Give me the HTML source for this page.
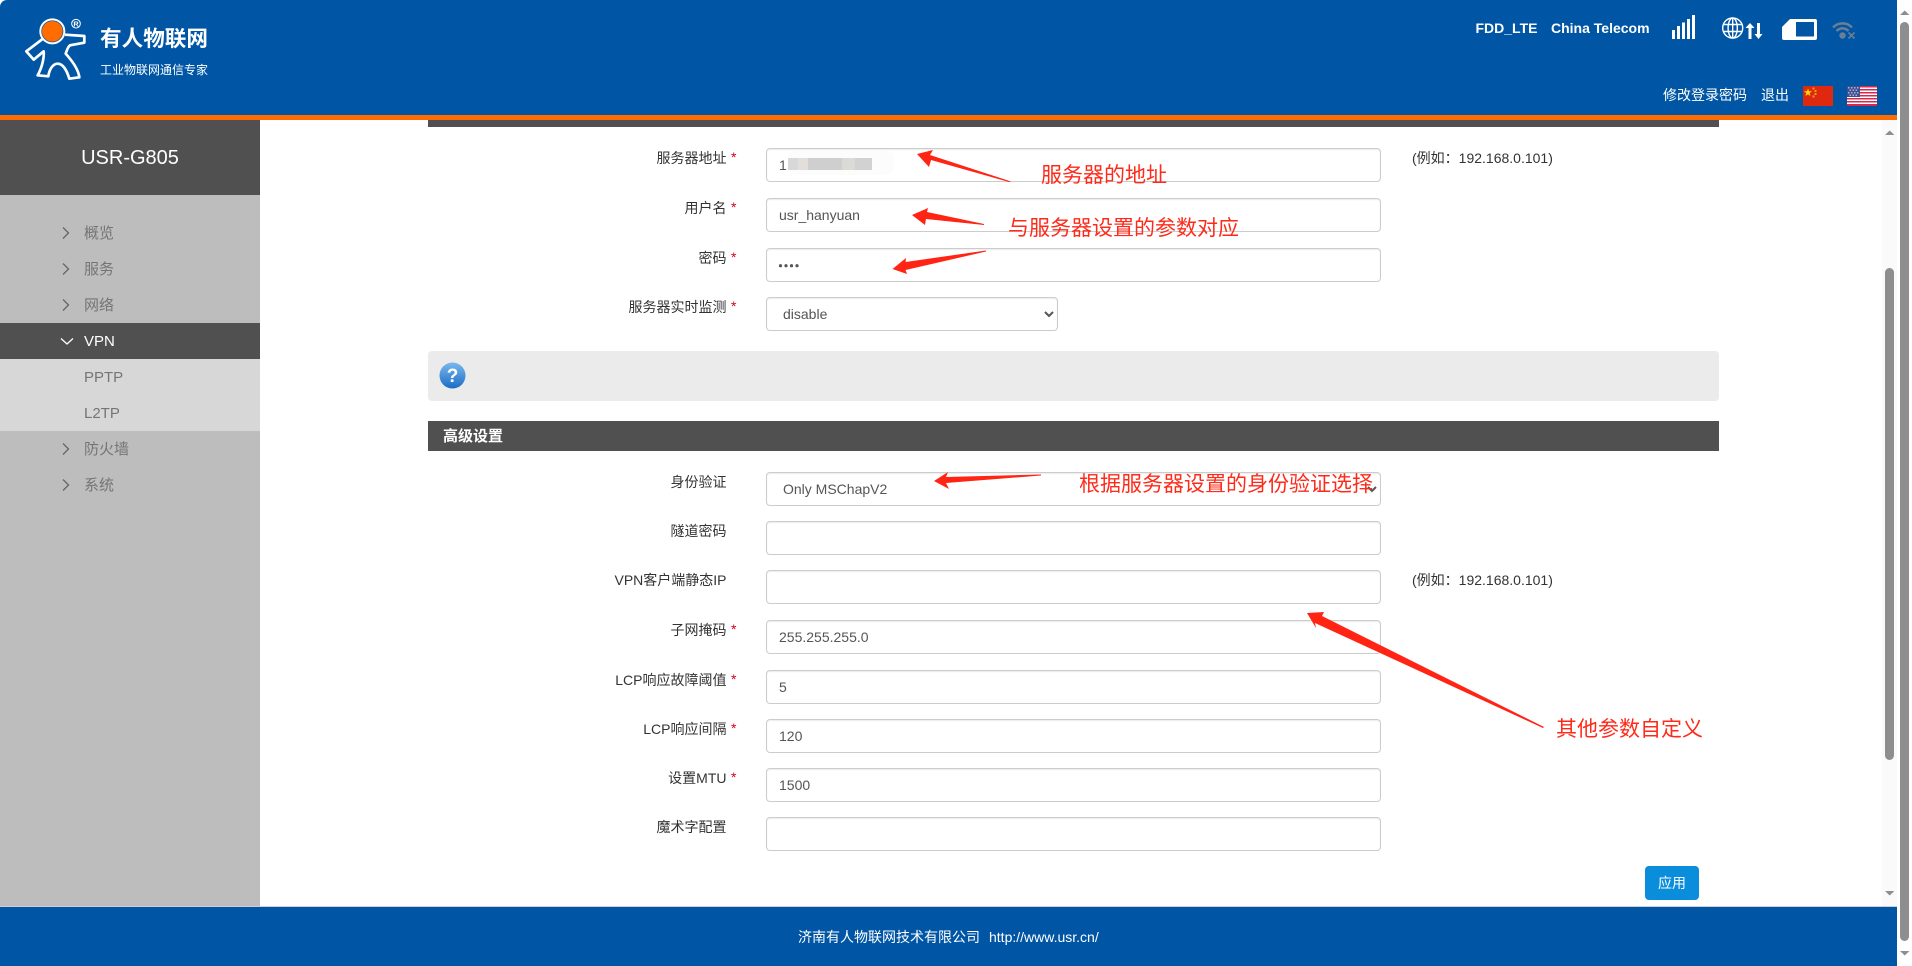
<!DOCTYPE html>
<html lang="zh-CN">
<head>
<meta charset="utf-8">
<title>USR-G805</title>
<style>
*{box-sizing:border-box}
html,body{margin:0;padding:0;width:1912px;height:966px;overflow:hidden;background:#fff}
body{position:relative;font-family:"Liberation Sans","Noto Sans CJK SC",sans-serif;font-size:14px;color:#333}
.a{position:absolute;white-space:nowrap}
#hd{position:absolute;left:0;top:0;width:1897px;height:120px;background:#0056a5;border-bottom:5px solid #ff6c00;border-top-left-radius:7px}
.w{color:#fff}
#side{position:absolute;left:0;top:120px;width:260px;height:786px;background:#bdbdbd}
#side .t{position:absolute;left:0;top:0;width:260px;height:75px;background:#505050;color:#fff;font-size:20px;line-height:77px;text-align:center}
.m{position:absolute;left:0;width:260px;height:36px;line-height:38px;font-size:15px;color:#757575;padding-left:84px}
.m svg{position:absolute;left:60px;top:10px}
.m.on{background:#505050;color:#fff}
.m.sub{background:#d7d7d7}
.bar{position:absolute;left:428px;width:1291px;background:#505050}
.lb{position:absolute;left:426px;width:300.5px;height:20px;line-height:20px;text-align:right;white-space:nowrap;color:#333}
.st{position:absolute;left:731px;height:20px;line-height:18px;color:#d0021b;font-size:14px}
.in{position:absolute;left:766px;width:615px;height:34px;border:1px solid #ccc;border-radius:4px;padding:0 12px;font:14px "Liberation Sans","Noto Sans CJK SC",sans-serif;color:#555;background:#fff;box-shadow:inset 0 1px 1px rgba(0,0,0,.075);outline:0}
select.in{padding:0 8px 0 12px}
.hint{position:absolute;left:1412px;height:20px;line-height:20px;white-space:nowrap;color:#333}
.ann{position:absolute;white-space:nowrap;color:#ff2a1a;font-size:21px;line-height:26px;height:26px}
#ft{position:absolute;left:0;top:906px;width:1897px;height:60px;background:#0056a5;border-top:1px solid #d0d0d0;color:#fff}
</style>
</head>
<body>

<div id="hd"></div>

<!-- logo -->
<svg class="a" style="left:15px;top:12px" width="80" height="76" viewBox="0 0 240 228">
  <circle cx="112" cy="58" r="31" fill="#ff6c00"/>
  <circle cx="112" cy="58" r="36" fill="none" stroke="#fff" stroke-width="6"/>
  <path d="M84 80 L34 118 L56 143 L86 118 C88 135 82 165 68 190 L100 193 C103 170 115 155 128 155 C145 155 155 175 163 200 L193 196 C190 170 170 145 152 125 C156 115 158 105 165 100 L208 92 L208 72 L150 68" fill="none" stroke="#fff" stroke-width="8" stroke-linejoin="round"/>
  <circle cx="183" cy="35" r="13" fill="none" stroke="#fff" stroke-width="3"/>
  <text x="183" y="43" font-family="Liberation Sans" font-size="22" font-weight="bold" fill="#fff" text-anchor="middle">R</text>
</svg>
<div class="a w" style="left:100px;top:26px;font-size:21.6px;line-height:26px;font-weight:bold">有人物联网</div>
<div class="a w" style="left:100px;top:62px;font-size:12px;line-height:16px">工业物联网通信专家</div>

<!-- header status -->
<div class="a w" style="left:1475.500px;top:18px;line-height:20px;font-weight:bold;font-size:14px">FDD_LTE</div>
<div class="a w" style="left:1551px;top:18px;line-height:20px;font-weight:bold;font-size:14px">China Telecom</div>

<svg class="a" style="left:1670px;top:12px" width="28" height="30" viewBox="0 0 28 30" fill="#fff">
  <rect x="2" y="18" width="3" height="9"/>
  <rect x="7" y="14" width="3" height="13"/>
  <rect x="12" y="10.500" width="3" height="16.500"/>
  <rect x="17" y="7" width="3" height="20"/>
  <rect x="22" y="3" width="3" height="24"/>
</svg>

<svg class="a" style="left:1720px;top:15px" width="46" height="26" viewBox="0 0 46 26" fill="none">
  <g stroke="#fff" stroke-width="1.400">
    <circle cx="12.700" cy="13" r="10"/>
    <ellipse cx="12.700" cy="13" rx="4.600" ry="10"/>
    <path d="M12.700 3V23M3 9.500H22.400M3 16.500H22.400"/>
  </g>
  <path d="M30 8 L34.500 13 H31.500 V24 H28.500 V13 H25.500Z" fill="#fff"/>
  <path d="M37 8 H40 V19 H42.500 L38.500 24 L34.500 19 H37Z" fill="#fff"/>
</svg>

<svg class="a" style="left:1782px;top:19px" width="36" height="22" viewBox="0 0 36 22">
  <path fill="#fff" d="M8 0H33Q35 0 35 2V19Q35 21 33 21H2Q0 21 0 19V8Z"/>
  <rect x="14" y="3" width="18" height="14.500" fill="#0056a5"/>
</svg>

<svg class="a" style="left:1832px;top:20px" width="26" height="20" viewBox="0 0 26 20" fill="none">
  <g stroke="#6a7f96" stroke-width="2.400">
    <path d="M1 7.500C6 2 15 2 20 7.500"/>
    <path d="M4.500 11C8 7.500 13 7.500 16.500 11"/>
  </g>
  <circle cx="10.500" cy="15.500" r="3.200" fill="#6a7f96"/>
  <path d="M16.500 12.500L22.500 18.500M22.500 12.500L16.500 18.500" stroke="#6a7f96" stroke-width="1.600"/>
</svg>

<div class="a w" style="left:1663px;top:85px;line-height:20px">修改登录密码</div>
<div class="a w" style="left:1761px;top:85px;line-height:20px">退出</div>

<svg class="a" style="left:1803px;top:86px" width="30" height="20" viewBox="0 0 30 20">
  <rect width="30" height="20" fill="#de2910"/>
  <path d="M5 2.500L6 5.300H9L6.600 7.100L7.500 10L5 8.200L2.500 10L3.400 7.100L1 5.300H4Z" fill="#ffde00"/>
  <g fill="#e8a010">
    <rect x="9.500" y="1.500" width="2" height="2"/>
    <rect x="11.500" y="4" width="2" height="2"/>
    <rect x="11.500" y="7" width="2" height="2"/>
    <rect x="9.500" y="9.500" width="2" height="2"/>
  </g>
</svg>
<svg class="a" style="left:1847px;top:86px" width="30" height="20" viewBox="0 0 30 20">
  <rect width="30" height="20" fill="#fff"/>
  <g fill="#d4284c">
    <rect y="0" width="30" height="1.500"/><rect y="3" width="30" height="1.500"/><rect y="6" width="30" height="1.500"/>
    <rect y="9" width="30" height="1.500"/><rect y="12" width="30" height="1.500"/><rect y="15" width="30" height="1.500"/><rect y="18" width="30" height="2"/>
  </g>
  <rect width="13" height="11" fill="#3f4f8f"/>
  <g fill="#a9b2d6">
    <rect x="1" y="1" width="1.500" height="1.500"/><rect x="4" y="1" width="1.500" height="1.500"/><rect x="7" y="1" width="1.500" height="1.500"/><rect x="10" y="1" width="1.500" height="1.500"/>
    <rect x="2.500" y="3.500" width="1.500" height="1.500"/><rect x="5.500" y="3.500" width="1.500" height="1.500"/><rect x="8.500" y="3.500" width="1.500" height="1.500"/>
    <rect x="1" y="6" width="1.500" height="1.500"/><rect x="4" y="6" width="1.500" height="1.500"/><rect x="7" y="6" width="1.500" height="1.500"/><rect x="10" y="6" width="1.500" height="1.500"/>
    <rect x="2.500" y="8.500" width="1.500" height="1.500"/><rect x="5.500" y="8.500" width="1.500" height="1.500"/><rect x="8.500" y="8.500" width="1.500" height="1.500"/>
  </g>
</svg>

<!-- sidebar -->
<div id="side">
  <div class="t">USR-G805</div>
  <div class="m" style="top:95px"><svg width="10" height="16" viewBox="0 0 10 16" fill="none"><path d="M3 2.500L8.500 8L3 13.500" stroke="#666" stroke-width="1.300"/></svg>概览</div>
  <div class="m" style="top:131px"><svg width="10" height="16" viewBox="0 0 10 16" fill="none"><path d="M3 2.500L8.500 8L3 13.500" stroke="#666" stroke-width="1.300"/></svg>服务</div>
  <div class="m" style="top:167px"><svg width="10" height="16" viewBox="0 0 10 16" fill="none"><path d="M3 2.500L8.500 8L3 13.500" stroke="#666" stroke-width="1.300"/></svg>网络</div>
  <div class="m on" style="top:203px"><svg width="14" height="16" viewBox="0 0 14 16" fill="none"><path d="M1 5.500L7 11L13 5.500" stroke="#fff" stroke-width="1.300"/></svg>VPN</div>
  <div class="m sub" style="top:239px">PPTP</div>
  <div class="m sub" style="top:275px">L2TP</div>
  <div class="m" style="top:311px"><svg width="10" height="16" viewBox="0 0 10 16" fill="none"><path d="M3 2.500L8.500 8L3 13.500" stroke="#666" stroke-width="1.300"/></svg>防火墙</div>
  <div class="m" style="top:347px"><svg width="10" height="16" viewBox="0 0 10 16" fill="none"><path d="M3 2.500L8.500 8L3 13.500" stroke="#666" stroke-width="1.300"/></svg>系统</div>
</div>

<!-- content -->
<div class="bar" style="top:120px;height:7px"></div>

<div class="lb" style="top:148px">服务器地址</div><div class="st" style="top:148px">*</div>
<input class="in" style="top:148px" value="1">
<div class="a" style="left:788px;top:150px;width:106px;height:25px;background:#fcfcfc;border-radius:9px"></div>
<div class="a" style="left:788px;top:158px;width:84px;height:12px;background:linear-gradient(90deg,#d8d8d8 0 12%,#e2ded9 12% 24%,#cfcfcf 24% 64%,#dcdad7 64% 80%,#d2d2d2 80%)"></div>
<div class="hint" style="top:148px">(例如：192.168.0.101)</div>

<div class="lb" style="top:198px">用户名</div><div class="st" style="top:198px">*</div>
<input class="in" style="top:198px" value="usr_hanyuan">

<div class="lb" style="top:248px">密码</div><div class="st" style="top:248px">*</div>
<input class="in" style="top:248px">
<svg class="a" style="left:776px;top:260px" width="26" height="12" fill="#555">
  <circle cx="4.500" cy="5.700" r="1.600"/><circle cx="10" cy="5.700" r="1.600"/><circle cx="15.500" cy="5.700" r="1.600"/><circle cx="21" cy="5.700" r="1.600"/>
</svg>

<div class="lb" style="top:297px">服务器实时监测</div><div class="st" style="top:297px">*</div>
<select class="in" style="top:297px;width:292px"><option>disable</option></select>

<div class="a" style="left:428px;top:351px;width:1291px;height:50px;background:#ebebeb;border-radius:4px"></div>
<svg class="a" style="left:438px;top:361px" width="29" height="29" viewBox="0 0 29 29">
  <defs><linearGradient id="q" x1="0" y1="0" x2="0" y2="1"><stop offset="0" stop-color="#7ab8ee"/><stop offset="1" stop-color="#1c6cc6"/></linearGradient></defs>
  <circle cx="14.500" cy="14.500" r="13" fill="url(#q)"/>
  <text x="14.500" y="21" font-family="Liberation Sans" font-size="19" font-weight="bold" fill="#fff" text-anchor="middle">?</text>
</svg>

<div class="bar" style="top:421px;height:30px"></div>
<div class="a w" style="left:443px;top:426px;line-height:21px;font-size:15px;font-weight:bold">高级设置</div>

<div class="lb" style="top:472px">身份验证</div>
<select class="in" style="top:472px"><option>Only MSChapV2</option></select>

<div class="lb" style="top:521px">隧道密码</div>
<input class="in" style="top:521px">

<div class="lb" style="top:570px">VPN客户端静态IP</div>
<input class="in" style="top:570px">
<div class="hint" style="top:570px">(例如：192.168.0.101)</div>

<div class="lb" style="top:620px">子网掩码</div><div class="st" style="top:620px">*</div>
<input class="in" style="top:620px" value="255.255.255.0">

<div class="lb" style="top:670px">LCP响应故障阈值</div><div class="st" style="top:670px">*</div>
<input class="in" style="top:670px" value="5">

<div class="lb" style="top:719px">LCP响应间隔</div><div class="st" style="top:719px">*</div>
<input class="in" style="top:719px" value="120">

<div class="lb" style="top:768px">设置MTU</div><div class="st" style="top:768px">*</div>
<input class="in" style="top:768px" value="1500">

<div class="lb" style="top:817px">魔术字配置</div>
<input class="in" style="top:817px">

<div class="a w" style="left:1645px;top:866px;width:54px;height:34px;line-height:34px;text-align:center;background:#0a8ddb;border-radius:4px">应用</div>

<!-- red annotations -->
<svg class="a" style="left:0;top:0" width="1912" height="966" viewBox="0 0 1912 966" fill="#ff2414">
  <polygon points="917,154 933,150 930,155 1011,181.500 1009,182 931,160 929,167"/>
  <polygon points="912,215 928,208 927,212 984,224 984,225 926,219 925,225"/>
  <polygon points="892.500,269 906,258 905.600,262 986,250.500 986,251.500 905.600,270 907,274"/>
  <polygon points="934,481 948,472 946,477 1041,474.500 1041,475.500 946,483 949,489"/>
  <polygon points="1307,613 1324,612 1322,616 1544,727 1543,728 1315,623 1316,628"/>
</svg>
<div class="ann" style="left:1041px;top:163px">服务器的地址</div>
<div class="ann" style="left:1008px;top:216px">与服务器设置的参数对应</div>
<div class="ann" style="left:1079px;top:472px">根据服务器设置的身份验证选择</div>
<div class="ann" style="left:1556px;top:717px">其他参数自定义</div>

<!-- inner scrollbar -->
<div class="a" style="left:1882px;top:120px;width:15px;height:786px;background:#fafafa"></div>
<div class="a" style="left:1885px;top:268px;width:9px;height:492px;background:#8e8e8e;border-radius:4.500px"></div>
<svg class="a" style="left:1885px;top:130px" width="10" height="6"><path d="M0 5L4.700 0.500L9.400 5Z" fill="#8e8e8e"/></svg>
<svg class="a" style="left:1885px;top:890px" width="10" height="6"><path d="M0 1L4.700 5.500L9.400 1Z" fill="#8e8e8e"/></svg>

<!-- footer -->
<div id="ft">
  <div class="a w" style="left:798px;top:20px;line-height:20px">济南有人物联网技术有限公司</div>
  <div class="a w" style="left:989px;top:20px;line-height:20px">http://www.usr.cn/</div>
</div>

<!-- outer scrollbar -->
<div class="a" style="left:1900px;top:22px;width:9px;height:919px;background:#8e8e8e;border-radius:4.500px"></div>
<svg class="a" style="left:1900px;top:10px" width="10" height="6"><path d="M0 5L4.700 0.500L9.400 5Z" fill="#8e8e8e"/></svg>
<svg class="a" style="left:1900px;top:950px" width="10" height="6"><path d="M0 1L4.700 5.500L9.400 1Z" fill="#8e8e8e"/></svg>

</body>
</html>
